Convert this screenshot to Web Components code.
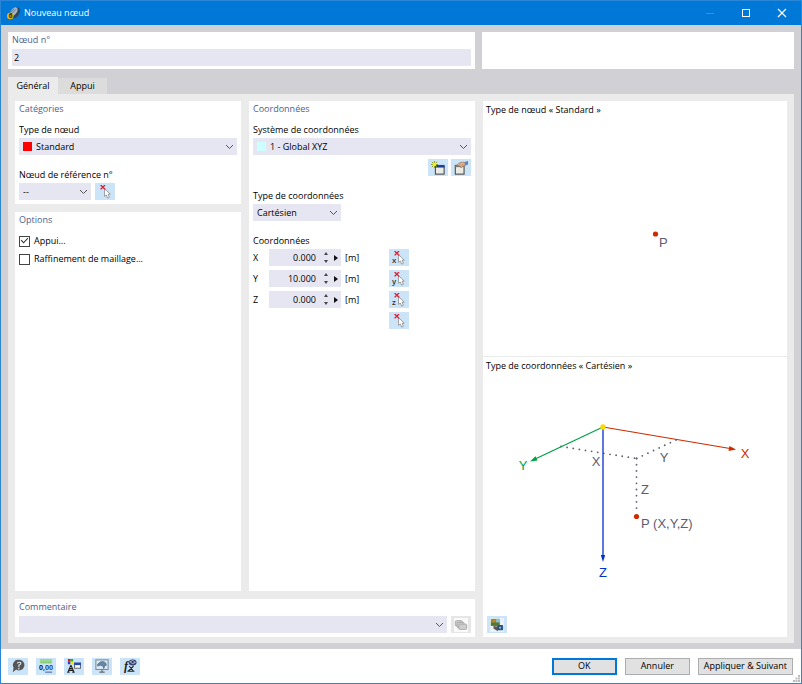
<!DOCTYPE html>
<html lang="fr">
<head>
<meta charset="utf-8">
<meta name="viewport" content="width=device-width, initial-scale=1">
<title>Nouveau nœud</title>
<style>
:root {
  --accent: #0078d7;
  --frame: #d0d0d5;
  --sheet: #ebebeb;
  --field: #e6e6f2;
  --tool: #cce4f7;
  --heading: #4a6192;
  --ink: #000;
}
body {
  margin: 0;
  color: var(--ink);
  font: 500 9px/12px "Open Sans", "Noto Sans", sans-serif;
}
</style>
</head>
<body>
<node-dialog></node-dialog>

<script>
const arrow = `<path d="M7.500 4v9l2-1.500 1.500 3.500 2-1-1.500-3.500h2.500z" fill="#fff" stroke="#888" stroke-width=".9"/><path d="M3 0l5 5M8 0l-5 5" stroke="#e02030" stroke-width="1.600"/>`;
const letter = (c) => `<text x="0" y="14" font-family="Open Sans, sans-serif" font-size="9" font-weight="600" fill="#333">${c}</text>`;

// every icon is drawn on a 16x16 grid
const icons = {
  pick: arrow,
  pickX: letter("x") + arrow,
  pickY: letter("y") + arrow,
  pickZ: letter("z") + arrow,
  create: `<rect x="5" y="6" width="10" height="9" fill="#eceae4" stroke="#444" stroke-width="1.200"/><path d="M5 4.500h10.500v3H5z" fill="#1c3f9a"/><path d="M4 0v8M0 4h8M1 1l6 6M7 1L1 7" stroke="#7f8f18"/><circle cx="4" cy="4" r="2" fill="#ffee20"/>`,
  edit: `<rect x="1.500" y="5" width="10" height="10" fill="#eceae4" stroke="#444" stroke-width="1.200"/><path d="M1 5h10v2H1z" fill="#777"/><path d="M3 5l3-3 4-1 3 1v3l-3 1-2 2-1-2z" fill="#d9a883" stroke="#9b7252" stroke-width=".6"/><path d="M12 1l4-1v4l-3 1z" fill="#5b84b8"/>`,
  layers: `<rect width="16" height="16" fill="#fafafa"/><g fill="#cfcfcf" stroke="#999" stroke-width=".8"><rect x="1.500" y="3" width="8" height="6" rx="1"/><rect x="3.500" y="5" width="8" height="6" rx="1"/><rect x="5.500" y="7" width="9" height="6" rx="1"/></g>`,
  picture: `<rect width="16" height="16" fill="#e9f1f6"/><path d="M1 1h10v8H1z" fill="#699b42"/><path d="M1 5h10v4H1z" fill="#557833"/><path d="M3 2h3v3H3z" fill="#d97828"/><path d="M7 1h4v4H7z" fill="#8fbedb"/><path d="M4 9l5 1v5l-5-3z" fill="#555"/><rect x="8" y="8" width="7" height="6" rx="1" fill="#315b8c"/><circle cx="11.500" cy="11" r="2" fill="#89a9c9" stroke="#173960"/>`,
  help: `<path d="M9 1a6 6 0 1 1-3 11l-4 3 1-5A6 6 0 0 1 9 1z" fill="#555"/><path d="M7 5q2-2 4-1 1 2-2 3v2M9 10v2" fill="none" stroke="#dfe8ef" stroke-width="1.300"/>`,
  digits: `<path d="M1 0h14v5H1z" fill="#9bd98c"/><path d="M3 3v2M5 3v2M7 3v2M9 3v2M11 3v2M13 3v2" stroke="#68ad59" stroke-width=".6"/><text x="0" y="13" font-family="Open Sans, sans-serif" font-size="8" font-weight="700" fill="#222">0,<tspan fill="#284c9a">00</tspan></text><path d="M7 15h8" stroke="#284c9a"/>`,
  display: `<path d="M1 0h3v3H1z" fill="#f01010"/><path d="M4 0h3v3H4z" fill="#20b030"/><path d="M1 3h3v3H1z" fill="#2040e0"/><path d="M4 3h3v3H4z" fill="#ffe000"/><path d="M4.500 7L1 15h2M4.500 7L8 15H6M3 11h3M2 13h5" fill="none" stroke="#222" stroke-width="1.300"/><rect x="8.500" y="5.500" width="7" height="5" fill="#fff" stroke="#555"/><path d="M8 4h8v3H8z" fill="#2548ad"/>`,
  monitor: `<rect x="1" y="1" width="14" height="11" fill="#dce9f2" stroke="#7d8c9a" stroke-width="1.200"/><path d="M8 12v3M5 15h6" stroke="#666" stroke-width="1.200"/><path d="M3 6q3-4 7-3 3 1 3 4l-2 1-1 3-1-3-3-1-3 1z" fill="#6787a8" stroke="#3f6184" stroke-width=".7"/>`,
  formula: `<text x="1" y="12" font-family="Liberation Serif, serif" font-size="14" font-style="italic" font-weight="700" fill="#222">f</text><path d="M7 8l5 6M12 8l-6 6M5 14h8" stroke="#222" stroke-width="1.300"/><ellipse cx="11" cy="4" rx="4.500" ry="3.500" fill="#34406c"/><path d="M7 3l4-2 4 3-4 2z" fill="#a6aecb"/><circle cx="11" cy="3.500" r="1.300" fill="#23305c"/>`,
  app: `<ellipse cx="10.500" cy="7" rx="4.500" ry="7.500" transform="rotate(35 10 7)" fill="#2f4560"/><ellipse cx="8.500" cy="5.500" rx="3.500" ry="6" transform="rotate(35 8 5.500)" fill="#a9b8c8"/><path d="M4 7l5-5M5 9l6-6" stroke="#53657a"/><circle cx="4" cy="11" r="4" fill="#e6b51c"/><text x="2" y="14" font-family="Open Sans, sans-serif" font-size="8" font-weight="700" fill="#33290a">6</text>`,
  minimize: `<path d="M4 8.500h8" stroke="#3393df"/>`,
  maximize: `<rect x="4.500" y="4.500" width="7" height="7" fill="none" stroke="#fff"/>`,
  close: `<path d="M4 4l8 8M12 4l-8 8" stroke="#fff" stroke-width="1.200"/>`,
};

const svg = (name, size = 14) => `<svg viewBox="0 0 16 16" width="${size}" height="${size}" aria-hidden="true">${icons[name]}</svg>`;

const chevron = `<svg class="chevron" width="9" height="6" viewBox="0 0 9 6" aria-hidden="true"><path d="M1 1l3.500 3.500L8 1" fill="none" stroke="#555"/></svg>`;

const reset = `
*, *::before { box-sizing: border-box; }
button, input, select { margin: 0; padding: 0; border: 0; border-radius: 0; color: inherit; font: inherit; }
svg { display: block; flex: none; }
`;

class BaseElement extends HTMLElement {
  connectedCallback() {
    if (this.shadowRoot) return;
    const shadow = this.attachShadow({ mode: "open" });
    shadow.innerHTML = `<style>${reset}${this.css()}</style>${this.html()}`;
  }
}

class ToolButton extends BaseElement {
  css() {
    return `
:host { display: block; flex: none; }
button { display: flex; align-items: center; justify-content: center; width: 20px; height: 17px; background: var(--tool); }
button:disabled { background: #e6e6e6; }`;
  }
  html() {
    return `<button type="button" aria-label="${this.getAttribute("label")}" ${this.hasAttribute("disabled") ? "disabled" : ""}>${svg(this.getAttribute("icon"))}</button>`;
  }
}

class PushButton extends BaseElement {
  css() {
    return `
:host { display: block; min-width: 65px; }
button { width: 100%; height: 17px; padding: 0 5px; background: #e1e1e1; border: 1px solid #adadad; white-space: nowrap; }
:host([primary]) button { border: 2px solid var(--accent); }`;
  }
  html() {
    return `<button type="button"><slot></slot></button>`;
  }
}

class GroupPanel extends BaseElement {
  css() {
    return `
:host { display: block; padding: 2px 4px 4px; background: #fff; }
h2 { margin: 0 0 9px; color: var(--heading); font: inherit; }
:host([compact]) h2 { margin-bottom: 3px; }
.content { display: flex; flex-direction: column; gap: 14px; }`;
  }
  html() {
    return `<h2>${this.getAttribute("heading")}</h2><div class="content"><slot></slot></div>`;
  }
}

class TextField extends BaseElement {
  css() {
    return `
:host { display: block; padding: 2px 4px 3px; background: #fff; }
label { display: block; margin-bottom: 3px; color: var(--heading); }
input { display: block; width: 100%; height: 17px; padding: 0 2px; background: var(--field); }`;
  }
  html() {
    return `<label for="text">${this.getAttribute("label")}</label><input id="text" type="text" value="${this.getAttribute("value")}">`;
  }
}

class ComboField extends BaseElement {
  css() {
    return `
:host { display: block; }
label { display: block; margin-bottom: 2px; }
.row { display: flex; gap: 4px; }
.combo { display: grid; flex: 1; align-items: center; background: var(--field); }
:host([size="small"]) .combo { flex: 0 0 72px; }
:host([size="medium"]) .combo { flex: 0 0 88px; }
.combo > * { grid-area: 1 / 1; }
select { width: 100%; height: 17px; padding: 0 16px 0 4px; appearance: none; background: none; }
.swatch { width: 9px; height: 9px; margin-left: 4px; pointer-events: none; }
.swatch + select { padding-left: 17px; }
.chevron { justify-self: end; margin-right: 3px; pointer-events: none; }`;
  }
  html() {
    const label = this.getAttribute("label");
    const value = this.getAttribute("value") ?? "";
    const swatch = this.getAttribute("swatch");
    return `
${label ? `<label for="combo">${label}</label>` : ""}
<div class="row">
  <div class="combo">
    ${swatch ? `<span class="swatch" style="background:${swatch}"></span>` : ""}
    <select id="combo" ${label ? "" : `aria-label="${this.getAttribute("name")}"`}><option>${value}</option></select>
    ${chevron}
  </div>
  <slot></slot>
</div>`;
  }
}

class CheckField extends BaseElement {
  css() {
    return `
:host { display: block; }
label { display: flex; align-items: center; gap: 4px; }
input { width: 11px; height: 11px; appearance: none; display: grid; place-content: center; background: #fff; border: 1px solid #444; }
input:checked::before { content: ""; width: 9px; height: 9px; background: #333; clip-path: polygon(8% 45%, 18% 36%, 40% 62%, 84% 14%, 92% 22%, 40% 78%); }`;
  }
  html() {
    return `<label><input type="checkbox" ${this.hasAttribute("checked") ? "checked" : ""}><slot></slot></label>`;
  }
}

class CoordRow extends BaseElement {
  css() {
    return `
:host { display: grid; grid-template-columns: 16px 72px 48px 20px; align-items: center; height: 17px; }
.value { display: flex; align-items: center; height: 17px; background: var(--field); }
input { flex: 1; min-width: 0; height: 17px; background: none; text-align: right; }
.spin { display: grid; margin-left: 6px; }
button { display: grid; place-items: center; width: 8px; height: 8px; background: none; }
.more { margin: 0 1px 0 2px; }
.unit { padding-left: 4px; }
.pick { grid-column: 4; }`;
  }
  html() {
    const axis = this.getAttribute("axis");
    if (!axis) return `<tool-button class="pick" icon="pick" label="Sélectionner un point"></tool-button>`;
    return `
<label for="value">${axis}</label>
<div class="value">
  <input id="value" type="text" inputmode="decimal" value="${this.getAttribute("value")}">
  <div class="spin">
    <button type="button" aria-label="Augmenter"><svg width="4" height="3"><path d="M0 3l2-3 2 3z" fill="#444"/></svg></button>
    <button type="button" aria-label="Diminuer"><svg width="4" height="3"><path d="M0 0l2 3 2-3z" fill="#444"/></svg></button>
  </div>
  <button class="more" type="button" aria-label="Plus"><svg width="4" height="6"><path d="M0 0l4 3-4 3z" fill="#111"/></svg></button>
</div>
<span class="unit">[m]</span>
<tool-button class="pick" icon="pick${axis}" label="Sélectionner ${axis}"></tool-button>`;
  }
}

class PreviewPane extends BaseElement {
  css() {
    return `
:host { display: flex; flex-direction: column; padding-top: 3px; background: #fff; }
.caption { padding: 0 3px; }
.drawing { display: flex; flex: 1; align-items: flex-start; justify-content: center; overflow: hidden; }
text { font: 13px "Liberation Sans", Arial, sans-serif; fill: #5d5d70; }
.mid { text-anchor: middle; }
footer { padding: 4px; }
footer[hidden] { display: none; }`;
  }
  html() {
    const drawing = this.getAttribute("drawing");
    return `
<div class="caption">${this.getAttribute("caption")}</div>
<div class="drawing"><svg width="304" height="240" viewBox="0 0 304 240">${drawing === "axes" ? this.axes() : this.point()}</svg></div>
<footer ${drawing === "axes" ? "" : "hidden"}><slot></slot></footer>`;
  }
  point() {
    return `<circle cx="172.500" cy="118" r="2.600" fill="#cc2c00"/><text x="176" y="131">P</text>`;
  }
  axes() {
    return `
<g fill="none" stroke="#5d5d70" stroke-width="1.800" stroke-linecap="round" stroke-dasharray="0 6.200">
  <path d="M78 74.500L153.500 86.500"/>
  <path d="M193 68L153.500 86.500"/>
  <path d="M153.500 86.500V141"/>
</g>
<path d="M120 55L50 88" stroke="#00a046" stroke-width="1.200"/>
<path d="M47 89.500l5.500-5.200 2 4.300z" fill="#00a046"/>
<path d="M120 55L247 76.500" stroke="#cc2c00" stroke-width="1.200"/>
<path d="M253 77.500l-7.400 1.400.8-4.800z" fill="#cc2c00"/>
<path d="M120 55V185" stroke="#2a4bd4" stroke-width="1.500"/>
<path d="M120 190l-2.200-7h4.400z" fill="#0033cc"/>
<circle cx="120" cy="55" r="2.700" fill="#ffd800"/>
<circle cx="153.500" cy="144.500" r="2.600" fill="#cc2c00"/>
<text class="mid" x="262" y="86" style="fill:#cc2c00">X</text>
<text class="mid" x="40" y="98" style="fill:#00a046">Y</text>
<text class="mid" x="120" y="205" style="fill:#0033cc">Z</text>
<text class="mid" x="113" y="94">X</text>
<text class="mid" x="181" y="90">Y</text>
<text class="mid" x="162" y="122">Z</text>
<text x="158" y="156">P (X,Y,Z)</text>`;
  }
}

class TitleBar extends BaseElement {
  css() {
    return `
:host { display: flex; align-items: center; height: 24px; padding: 0 1px 0 6px; background: var(--accent); color: #fff; }
h1 { flex: 1; margin: 0 0 0 4px; font: inherit; }
button { display: grid; place-items: center; width: 36px; height: 24px; background: none; }`;
  }
  html() {
    return `
${svg("app", 13)}
<h1><slot></slot></h1>
<button type="button" aria-label="Réduire">${svg("minimize", 16)}</button>
<button type="button" aria-label="Agrandir">${svg("maximize", 16)}</button>
<button type="button" aria-label="Fermer">${svg("close", 16)}</button>`;
  }
}

class TabStrip extends BaseElement {
  css() {
    return `
:host { display: flex; align-items: flex-end; }
button { height: 16px; min-width: 49px; padding: 0 8px; background: #dcdcdc; }
button[aria-selected="true"] { height: 17px; min-width: 50px; background: var(--sheet); }`;
  }
  html() {
    const tabs = this.getAttribute("tabs").split(",");
    return tabs.map((t, i) => `<button type="button" role="tab" aria-selected="${i === 0}">${t}</button>`).join("");
  }
  connectedCallback() {
    super.connectedCallback();
    this.setAttribute("role", "tablist");
    const tabs = [...this.shadowRoot.querySelectorAll("button")];
    tabs.forEach((tab) => {
      tab.addEventListener("click", () => {
        tabs.forEach((t) => t.setAttribute("aria-selected", t === tab));
      });
    });
  }
}

class NodeDialog extends BaseElement {
  css() {
    return `
:host { position: relative; display: flex; flex-direction: column; min-height: 100vh; box-sizing: border-box; border: 1px solid #2b87d6; background: #fff; }
main { display: flex; flex: 1; flex-direction: column; padding: 7px 7px 6px; background: var(--frame); }
.head { display: grid; grid-template-columns: 467fr 312fr; gap: 7px; margin-bottom: 8px; }
.blank { background: #fff; }
.sheet { display: grid; flex: 1; grid-template-columns: 226fr 226fr 304fr; grid-template-rows: 1fr auto; gap: 8px; padding: 7px 7px 6px; background: var(--sheet); }
.stack { display: flex; flex-direction: column; gap: 8px; }
.grow { flex: 1; }
.checks, .coords { display: flex; flex-direction: column; }
.checks { gap: 6px; }
.coords { gap: 4px; }
.caption { margin-bottom: -2px; }
.tools { display: flex; justify-content: flex-end; gap: 3px; margin-top: 4px; }
.preview { display: flex; grid-area: 1 / 3 / 3 / 4; flex-direction: column; background: #fff; }
.preview > :first-child { flex: 1; border-bottom: 1px solid var(--sheet); }
.comment { grid-area: 2 / 1 / 3 / 3; }
footer { display: flex; align-items: center; justify-content: space-between; height: 34px; padding: 0 8px 0 7px; }
.icons, .actions { display: flex; gap: 8px; }
.grip { position: absolute; right: 1px; bottom: 1px; }`;
  }
  html() {
    return `
<title-bar>Nouveau nœud</title-bar>
<main>
  <div class="head">
    <text-field label="Nœud n°" value="2"></text-field>
    <div class="blank"></div>
  </div>
  <tab-strip tabs="Général,Appui"></tab-strip>
  <div class="sheet">
    <div class="stack">
      <group-panel heading="Catégories">
        <combo-field label="Type de nœud" value="Standard" swatch="#ff0000"></combo-field>
        <combo-field label="Nœud de référence n°" value="--" size="small">
          <tool-button icon="pick" label="Sélectionner un nœud"></tool-button>
        </combo-field>
      </group-panel>
      <group-panel class="grow" heading="Options">
        <div class="checks">
          <check-field checked>Appui...</check-field>
          <check-field>Raffinement de maillage...</check-field>
        </div>
      </group-panel>
    </div>
    <group-panel heading="Coordonnées">
      <div>
        <combo-field label="Système de coordonnées" value="1 - Global XYZ" swatch="#ccffff"></combo-field>
        <div class="tools">
          <tool-button icon="create" label="Nouveau système"></tool-button>
          <tool-button icon="edit" label="Modifier le système"></tool-button>
        </div>
      </div>
      <combo-field label="Type de coordonnées" value="Cartésien" size="medium"></combo-field>
      <div class="coords">
        <div class="caption">Coordonnées</div>
        <coord-row axis="X" value="0.000"></coord-row>
        <coord-row axis="Y" value="10.000"></coord-row>
        <coord-row axis="Z" value="0.000"></coord-row>
        <coord-row></coord-row>
      </div>
    </group-panel>
    <group-panel class="comment" heading="Commentaire" compact>
      <combo-field name="Commentaire">
        <tool-button icon="layers" label="Commentaires enregistrés" disabled></tool-button>
      </combo-field>
    </group-panel>
    <div class="preview">
      <preview-pane caption="Type de nœud « Standard »" drawing="point"></preview-pane>
      <preview-pane caption="Type de coordonnées « Cartésien »" drawing="axes">
        <tool-button icon="picture" label="Image"></tool-button>
      </preview-pane>
    </div>
  </div>
</main>
<footer>
  <div class="icons">
    <tool-button icon="help" label="Aide"></tool-button>
    <tool-button icon="digits" label="Unités et décimales"></tool-button>
    <tool-button icon="display" label="Affichage"></tool-button>
    <tool-button icon="monitor" label="Vue"></tool-button>
    <tool-button icon="formula" label="Formule"></tool-button>
  </div>
  <div class="actions">
    <push-button primary>OK</push-button>
    <push-button>Annuler</push-button>
    <push-button>Appliquer &amp; Suivant</push-button>
  </div>
</footer>
<svg class="grip" width="7" height="7" aria-hidden="true"><path d="M5 0h2v2H5zM5 2.500h2v2H5zM2.500 2.500h2v2h-2zM5 5h2v2H5zM2.500 5h2v2h-2zM0 5h2v2H0z" fill="#bbb"/></svg>`;
  }
}

customElements.define("tool-button", ToolButton);
customElements.define("push-button", PushButton);
customElements.define("group-panel", GroupPanel);
customElements.define("text-field", TextField);
customElements.define("combo-field", ComboField);
customElements.define("check-field", CheckField);
customElements.define("coord-row", CoordRow);
customElements.define("preview-pane", PreviewPane);
customElements.define("title-bar", TitleBar);
customElements.define("tab-strip", TabStrip);
customElements.define("node-dialog", NodeDialog);
</script>
</body>
</html>
